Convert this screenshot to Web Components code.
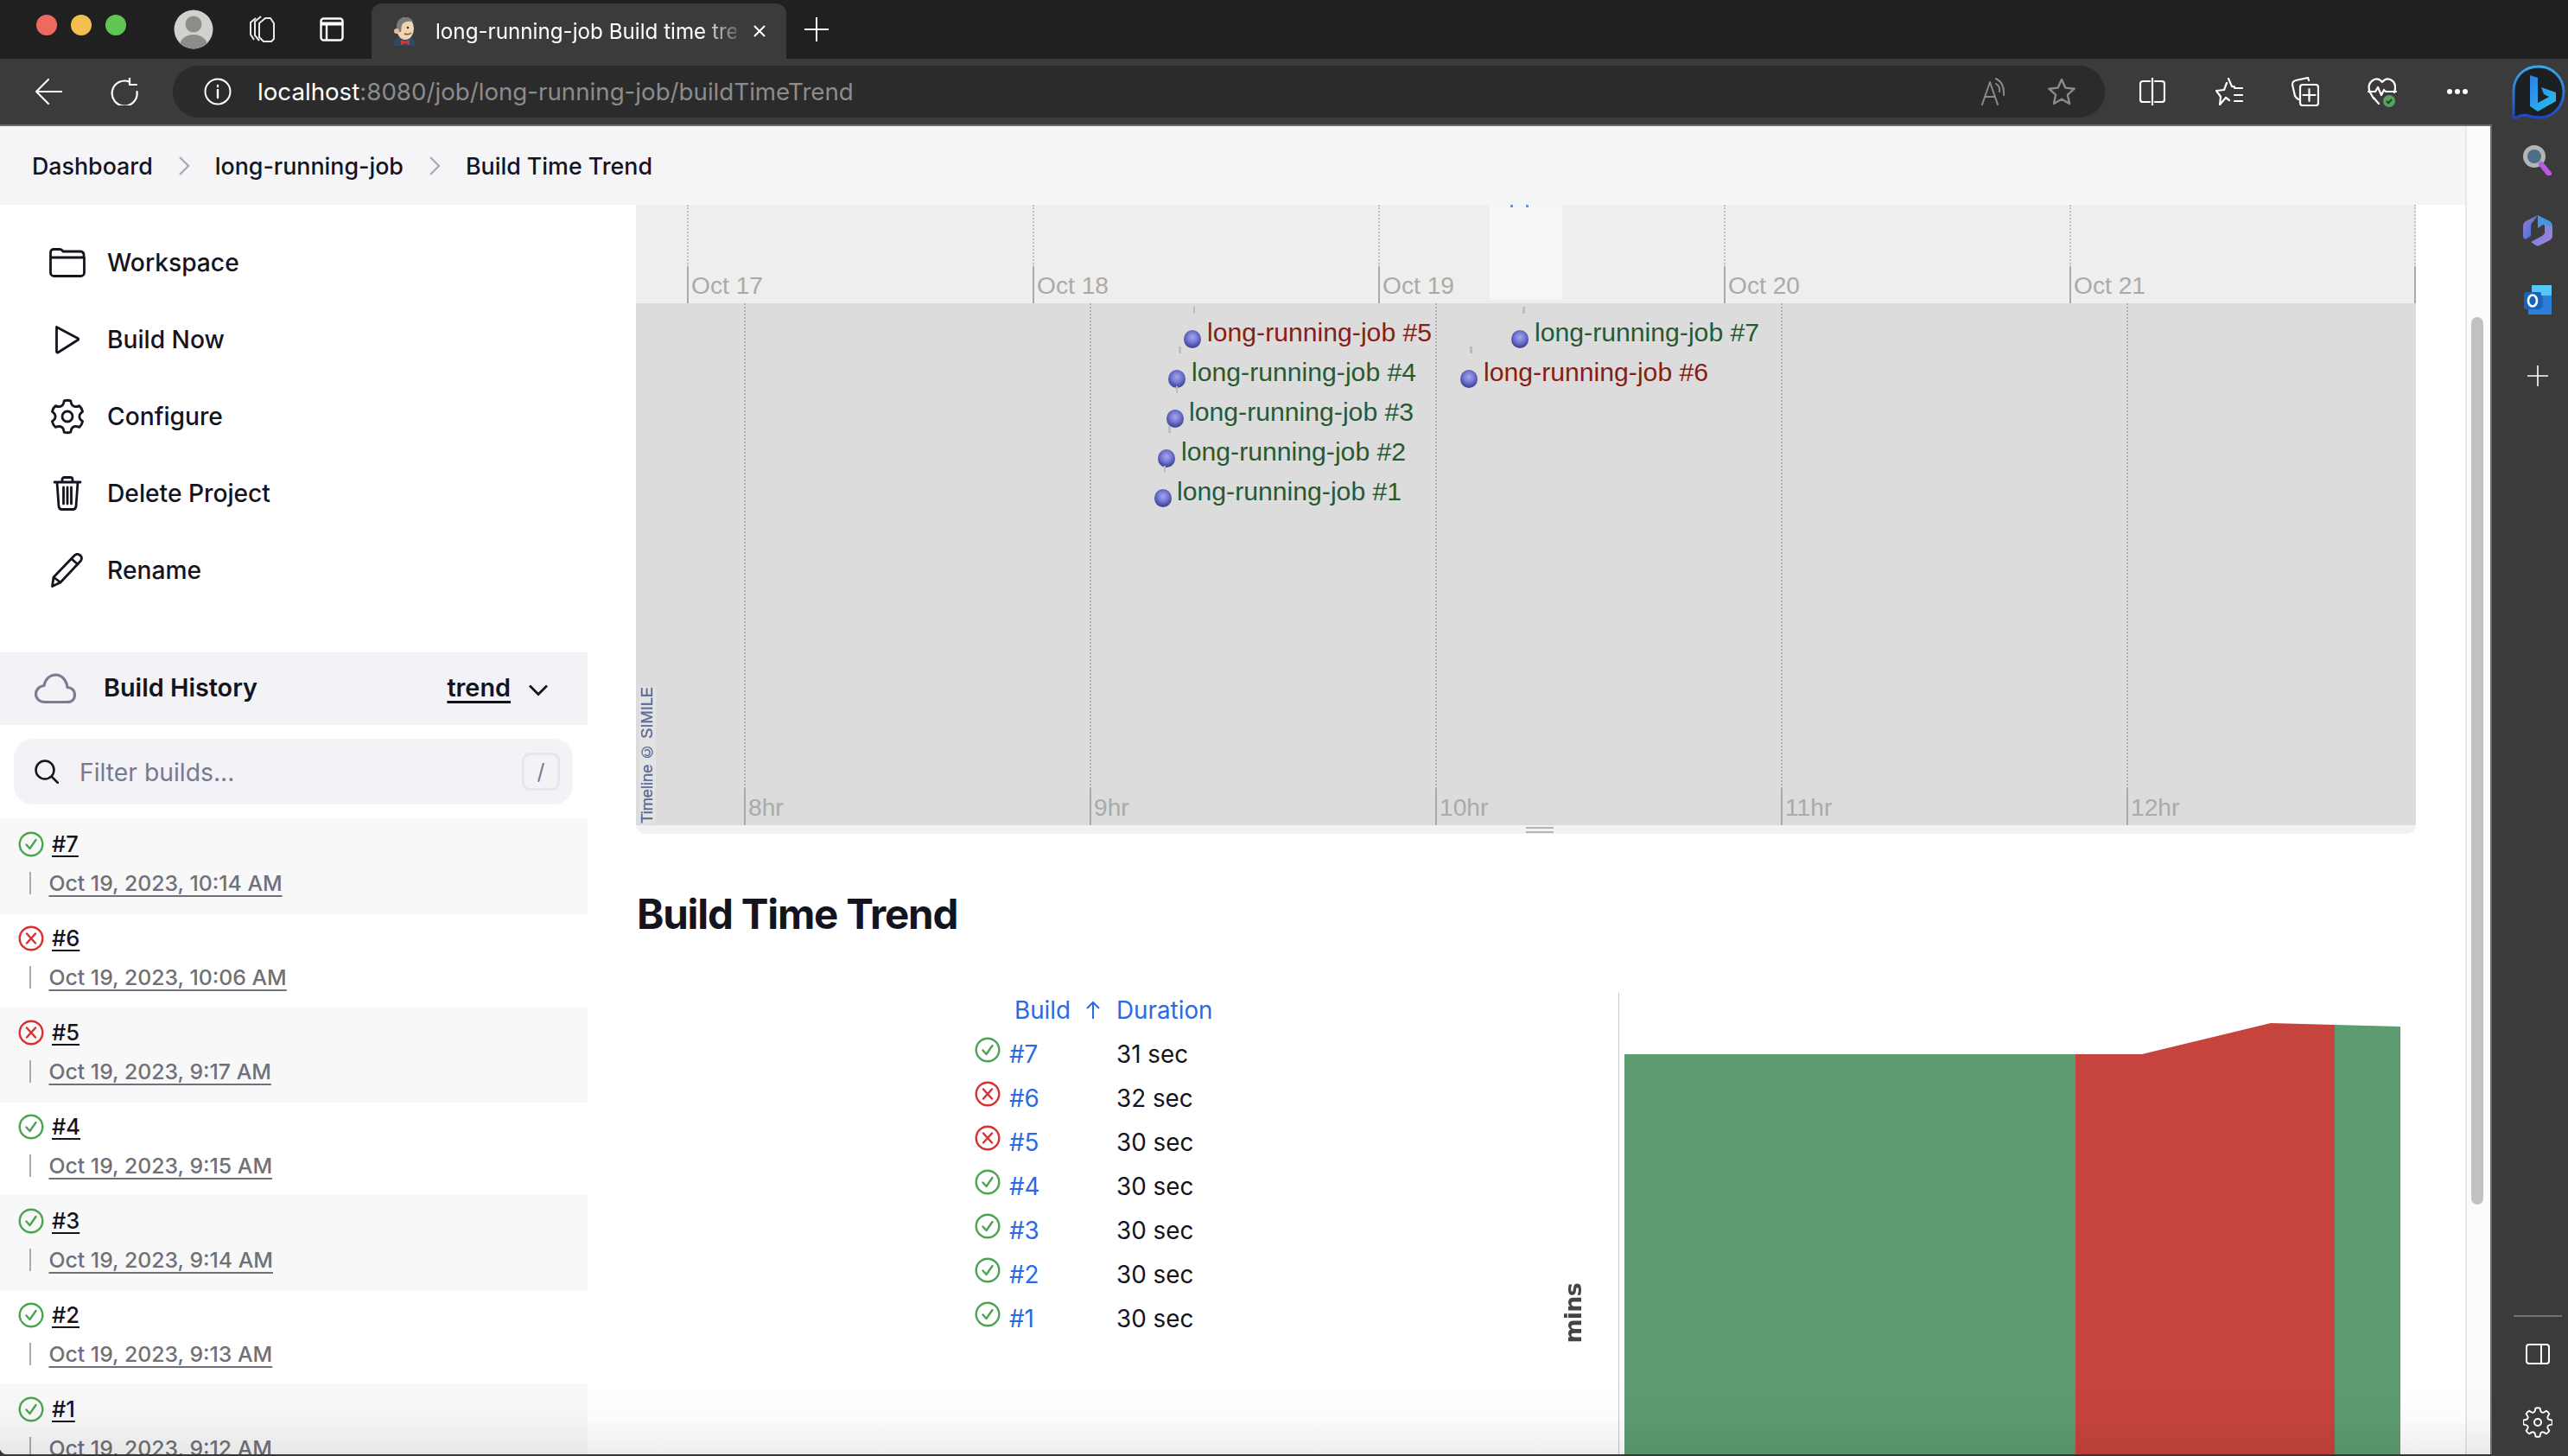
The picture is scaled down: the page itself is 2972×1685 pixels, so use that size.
<!DOCTYPE html>
<html lang="en">
<head>
<meta charset="utf-8">
<title>long-running-job Build time trend</title>
<style>
html,body{margin:0;padding:0;height:1685px;overflow:hidden;background:#fff;}
body{font-family:Inter,"Liberation Sans",sans-serif;color:#14141f;}
</style>
</head>
<body>
<app-window></app-window>
<script>
function def(name, render){
  customElements.define(name, class extends HTMLElement{
    connectedCallback(){
      if(this.shadowRoot) return;
      this.attachShadow({mode:'open'}).innerHTML = render(this);
    }
  });
}
function gearPath(cx,cy,ro,ri,n){
  var d='',step=Math.PI*2/n;
  function p(r,a){return (cx+r*Math.cos(a)).toFixed(2)+' '+(cy+r*Math.sin(a)).toFixed(2);}
  for(var i=0;i<n;i++){
    var a=-Math.PI/2+i*step;
    d+=(i?'L':'M')+p(ro,a-step*.2)+' Q'+p(ro*1.05,a)+' '+p(ro,a+step*.2)+' Q'+p(ri*.98,a+step*.32)+' '+p(ri,a+step*.5)+' Q'+p(ri*.98,a+step*.68)+' '+p(ro,a+step*.8);
  }
  return d+'Z';
}

/* ---------- browser frame ---------- */
def('tab-strip',()=>`<style>
:host{display:flex;align-items:center;height:68px;background:#202020;box-sizing:border-box;padding-left:42px;position:relative}
.l{width:24px;height:24px;border-radius:50%;margin-right:16px;position:relative;top:-5px}
svg{display:block;flex:none}
.tab{width:480px;height:64px;align-self:flex-end;background:#3b3b3b;border-radius:12px 12px 0 0;display:flex;align-items:center;box-sizing:border-box;padding-left:22px;margin-left:32px;color:#fff}
.t{font:400 24.2px Inter,"Liberation Sans",sans-serif;width:348px;margin-left:20px;white-space:nowrap;-webkit-mask-image:linear-gradient(90deg,#000 88%,rgba(0,0,0,.25) 100%);mask-image:linear-gradient(90deg,#000 88%,rgba(0,0,0,.25) 100%)}
</style>
<span class="l" style="background:#ee6a5f"></span><span class="l" style="background:#f5bf4f"></span><span class="l" style="background:#61c554;margin-right:0"></span>
<svg width="46" height="46" viewBox="0 0 46 46" style="margin-left:55px"><defs><clipPath id="a"><circle cx="23" cy="23" r="22.5"/></clipPath></defs><circle cx="23" cy="23" r="22.5" fill="#d2d1cd"/><g clip-path="url(#a)" fill="#8e8c88"><circle cx="23" cy="17" r="9.5"/><ellipse cx="23" cy="42" rx="16" ry="13"/></g></svg>
<svg width="34" height="34" viewBox="0 0 34 34" fill="none" stroke="#e8e8e8" stroke-width="2" style="margin-left:40px"><path d="M9 4 3 9v14l4 6M15 2 8 8v16l5 6"/><path d="M20 4 13 10v16l5 5h9l3-3V10l-4-6z" stroke-linejoin="round"/></svg>
<svg width="28" height="28" viewBox="0 0 28 28" fill="none" stroke="#fff" stroke-width="2.4" style="margin-left:49px"><rect x="1.5" y="1.5" width="25" height="25" rx="3"/><path d="M1.5 7.5h25" stroke-width="4"/><path d="M8 8v18"/></svg>
<div class="tab">
<svg width="32" height="34" viewBox="0 0 32 34"><path d="M3 34c0-8 6-11 13-11s13 3 13 11z" fill="#2e4b63"/><ellipse cx="17" cy="14" rx="10" ry="13" fill="#efd5b6"/><path d="M8 18c-3-8 0-17 9-17 4 0 7 1 9 5-6-1-11 0-13 4l-1 8z" fill="#7b7a78"/><circle cx="7" cy="17" r="3" fill="#e7b89b"/><circle cx="20" cy="13" r="1.3" fill="#333"/><path d="M16 20q4 2 8-1" stroke="#8b4a36" stroke-width="1.4" fill="none"/><path d="M12 27l5 2 5-2v6l-5-2-5 2z" fill="#d33833"/></svg>
<span class="t">long-running-job Build time tre</span>
<svg width="16" height="16" viewBox="0 0 16 16" stroke="#fff" stroke-width="2" style="margin-left:19px"><path d="M2 2l12 12M14 2 2 14"/></svg>
</div>
<svg width="28" height="28" viewBox="0 0 28 28" stroke="#fff" stroke-width="2" style="margin-left:21px"><path d="M14 0v28M0 14h28"/></svg>`);

def('tool-bar',()=>`<style>
:host{display:flex;align-items:center;height:76px;background:#3b3b3b;box-sizing:border-box;padding-left:40px;position:relative}
svg{display:block;flex:none}
.addr{width:2236px;height:60px;border-radius:30px;background:#2b2b2b;margin-left:40px;display:flex;align-items:center;box-sizing:border-box;padding-left:36px}
.u{font:400 27.7px Inter,"Liberation Sans",sans-serif;color:#8c8c8c;margin-left:30px;white-space:nowrap;flex:1}
.u b{font-weight:400;color:#fff}
.ic{fill:none;stroke:#fff;stroke-width:2.2;stroke-linecap:round;stroke-linejoin:round}
.g{stroke:#8b8b8b}
</style>
<svg class="ic" width="32" height="30" viewBox="0 0 32 30"><path d="M16 1 2 15l14 14M2 15h30" stroke-width="2"/></svg>
<svg class="ic" width="32" height="32" viewBox="0 0 32 32" style="margin-left:56px"><path d="M22 4.8A14.5 14.5 0 1 0 30.5 16"/><path d="M22 0v8h8"/></svg>
<div class="addr">
<svg class="ic" width="32" height="32" viewBox="0 0 32 32"><circle cx="16" cy="16" r="14.5" stroke-width="2"/><path d="M16 14v9M16 9v1" stroke-width="2.4"/></svg>
<span class="u"><b>localhost</b>:8080/job/long-running-job/buildTimeTrend</span>
<svg class="ic g" width="32" height="32" viewBox="0 0 32 32" style="margin-right:44px"><path d="M1 31 10 5l9 26M4 22h12M17 1q10 5 9 19M17 7q5 3 4 9" stroke-width="2"/></svg>
<svg class="ic g" width="34" height="32" viewBox="0 0 34 32" style="margin-right:33px"><path d="m17 2 4.3 9.6 10.4 1.1-7.8 7 2.2 10.3L17 24.7 7.900 30l2.200-10.300-7.800-7 10.400-1.100z" stroke-width="2.400"/></svg>
</div>
<svg class="ic" width="30" height="32" viewBox="0 0 30 32" style="margin-left:40px"><path d="M12 4H4a3 3 0 0 0-3 3v18a3 3 0 0 0 3 3h8M18 4h8a3 3 0 0 1 3 3v18a3 3 0 0 1-3 3h-8M15 0v32"/></svg>
<svg class="ic" width="32" height="32" viewBox="0 0 32 32" style="margin-left:58px"><path d="M15 1 19 10l3 .4M31 12H22M31 20H22M31 27h-9M12 23l-7 8 1-9-5-7 9-1 3-8"/><path d="M12 23l4 3"/></svg>
<svg class="ic" width="32" height="34" viewBox="0 0 32 34" style="margin-left:56px"><path d="M20 4 19 1 5 4Q1 5 1 9l3 13q1 2 4 4"/><rect x="10" y="9" width="21" height="24" rx="3"/><path d="M20.500 14v14M13.500 21h14"/></svg>
<svg width="34" height="36" viewBox="0 0 34 36" style="margin-left:56px"><g class="ic"><path d="M7 26 3 19Q-1 10 6 5q6-4 11 2 5-6 11-2 6 4 3 14M0 18h9l3-5 4 9 3-6 2 2h12M7 25l6 7"/></g><circle cx="25" cy="29" r="7" fill="#57a25e"/><path d="m22 29 2.200 2.200 4-4.400" fill="none" stroke="#1e3b22" stroke-width="1.800"/></svg>
<svg width="26" height="8" viewBox="0 0 26 8" fill="#fff" style="margin-left:57px"><circle cx="4" cy="4" r="3"/><circle cx="13" cy="4" r="3"/><circle cx="22" cy="4" r="3"/></svg>
<svg width="62" height="64" viewBox="0 0 62 64" style="margin-left:50px;position:relative;top:1px"><defs><linearGradient id="bo" x1="0" y1="0" x2="0" y2="1"><stop offset="0" stop-color="#3aa6e8"/><stop offset="1" stop-color="#1f47c4"/></linearGradient><linearGradient id="bb" x1="0" y1="0" x2="1" y2="1"><stop offset="0" stop-color="#2e7ee8"/><stop offset="1" stop-color="#29c3e8"/></linearGradient></defs><path d="M31 2C14 2 2 14 2 30v30q0 2 3 1 8-4 14-2 6 2 13 2c17 0 28-14 28-30S47 2 31 2z" fill="#1d2022" stroke="url(#bo)" stroke-width="3"/><path d="M21 12l9 3v29l13-7-6-3-3-8 17 6v10L30 54l-9-6z" fill="url(#bb)"/></svg>`);

def('side-rail',()=>`<style>
:host{display:flex;flex-direction:column;align-items:center;width:88px;background:#3b3b3b;box-sizing:border-box;padding:23px 0 0 18px;flex:none;height:1539px}
svg{display:block;flex:none}
.ic{fill:none;stroke:#fff;stroke-width:2;stroke-linecap:round;stroke-linejoin:round}
hr{width:56px;height:2px;border:0;background:#707070;margin:auto 0 31px}
</style>
<svg width="36" height="36" viewBox="0 0 36 36"><circle cx="14" cy="14" r="10.500" fill="#4d6d88" stroke="#b4b4b4" stroke-width="5"/><path d="m22 23 9 11" stroke="#b85be0" stroke-width="6" stroke-linecap="round"/></svg>
<svg width="34" height="36" viewBox="0 0 34 36" style="margin-top:46px"><defs><linearGradient id="c1" x1="0" y1="0" x2="1" y2="1"><stop offset="0" stop-color="#9e7be0"/><stop offset="1" stop-color="#2c6ed0"/></linearGradient><linearGradient id="c2" x1="0" y1="0" x2="1" y2="1"><stop offset="0" stop-color="#5b8fe4"/><stop offset="1" stop-color="#b27ad8"/></linearGradient></defs><path d="M17 0 3 7Q0 9 0 12v12q0 3 3 4l6-4V12q0-3 3-5z" fill="url(#c1)"/><path d="M17 0l14 7q3 2 3 5v4l-11-5-6 4V6z" fill="#4a94df"/><path d="M34 14v10q0 3-3 5l-12 6q-2 1-4 0l-6-4 13-7 3-3V11z" fill="url(#c2)"/></svg>
<svg width="32" height="34" viewBox="0 0 32 34" style="margin-top:45px"><path d="M9 0h23v17H9z" fill="#55c6f5"/><path d="M5 12h27v22H5z" fill="#2c7fd6"/><path d="M9 12h13v14l-13-.000z" fill="#2566b8"/><rect x="0" y="8" width="20" height="20" rx="2" fill="#1a63bd"/><ellipse cx="10" cy="18" rx="5" ry="6.500" fill="none" stroke="#fff" stroke-width="2.600"/></svg>
<svg class="ic" width="24" height="24" viewBox="0 0 24 24" style="margin-top:59px"><path d="M12 0v24M0 12h24" stroke-width="1.600"/></svg>
<hr>
<svg class="ic" width="28" height="24" viewBox="0 0 28 24" style="margin-bottom:49px"><rect x="1" y="1" width="26" height="22" rx="3"/><path d="M18 1v22"/></svg>
<svg class="ic" width="34" height="36" viewBox="0 0 34 36" style="margin-bottom:19px"><path d="${gearPath(17,18,16.500,12.500,8)}" stroke-width="1.900"/><circle cx="17" cy="18" r="4"/></svg>`);

/* ---------- jenkins page ---------- */
def('bread-crumbs',()=>`<style>
:host{display:flex;align-items:center;height:91px;background:#f5f5f8;box-sizing:border-box;padding-left:37px;font:500 26.8px Inter,"Liberation Sans",sans-serif;color:#14141f;flex:none}
svg{margin:0 29px 0 29px;display:block}
</style>
<span>Dashboard</span>
<svg width="14" height="22" viewBox="0 0 14 22" fill="none" stroke="#a9a9bd" stroke-width="2.400"><path d="m2 1 10 10L2 21"/></svg>
<span>long-running-job</span>
<svg width="14" height="22" viewBox="0 0 14 22" fill="none" stroke="#a9a9bd" stroke-width="2.400"><path d="m2 1 10 10L2 21"/></svg>
<span>Build Time Trend</span>`);

const TASK_ICONS={
 folder:`<svg width="42" height="34" viewBox="0 0 42 34"><path d="M1.500 11V5a3.500 3.500 0 0 1 3.500-3.500h7a4 4 0 0 1 3 1.300l1 1.200h20.500a4 4 0 0 1 3.500 3.500V11M1.500 11h39v17.500a4 4 0 0 1-4 4h-31a4 4 0 0 1-4-4z"/></svg>`,
 play:`<svg width="42" height="34" viewBox="0 0 42 34"><path d="M8.500 2.500 33 15.500q1.500 1 0 2L10 32q-1.500.5-1.500-1.500z"/></svg>`,
 gear:`<svg width="42" height="42" viewBox="0 0 42 42"><path d="${gearPath(21,21,18.500,14,6)}"/><circle cx="21" cy="21" r="6"/></svg>`,
 trash:`<svg width="42" height="40" viewBox="0 0 42 40"><path d="M6 7h30M15 7V4q0-2.500 2.500-2.500h7Q27 1.500 27 4v3M9 7l2 28q.500 3.500 3.500 3.500h13q3 0 3.500-3.500l2-28M16.500 13v19M21 13v19M25.500 13v19"/></svg>`,
 pencil:`<svg width="42" height="40" viewBox="0 0 42 40"><path d="M3.500 38.500 5 28 29 3q3-3 6.500-.5t1 6.500L13 34zM5 28l8 6M26 7l7 6"/></svg>`
};
def('task-item',(h)=>`<style>
:host{display:flex;align-items:center;height:89px;padding-left:57px;font:500 28.2px Inter,"Liberation Sans",sans-serif;color:#14141f}
svg{display:block;fill:none;stroke:#14141f;stroke-width:2.800;stroke-linejoin:round;stroke-linecap:round}
.i{width:67px;flex:none}
</style><span class="i">${TASK_ICONS[h.getAttribute('icon')]}</span><span><slot></slot></span>`);

def('status-icon',(h)=>{
 const ok=h.getAttribute('kind')==='ok', c=ok?'#4ca350':'#d9302f';
 return `<style>:host{display:block;width:30px;height:30px;flex:none}svg{display:block}</style>
 <svg width="30" height="30" viewBox="0 0 30 30" fill="none" stroke="${c}" stroke-width="2.400" stroke-linecap="round" stroke-linejoin="round"><circle cx="15" cy="15" r="13.300"/>${ok?'<path d="m9.500 15.500 4 4.500 7-10"/>':'<path d="m10 9.500 10 11M20 9.500l-10 11"/>'}</svg>`;
});

def('build-row',(h)=>{
 const odd=h.hasAttribute('odd');
 return `<style>
 :host{display:flex;flex-direction:column;height:109px;box-sizing:border-box;padding:14px 0 0 21px;position:relative;${odd?'background:#f8f8f9;box-shadow:0 -1px 0 #f8f8f9,0 1px 0 #f8f8f9;':''}font-family:Inter,"Liberation Sans",sans-serif}
 .t{display:flex;align-items:center;height:30px;font:500 25.500px/30px Inter,"Liberation Sans",sans-serif;color:#14141f}
 .t a{margin-left:9px;text-decoration:underline;text-decoration-thickness:2px;text-underline-offset:4px;color:inherit}
 .d{display:flex;align-items:center;height:30px;margin-top:15px;font:450 24.800px/30px Inter,"Liberation Sans",sans-serif;color:#6f7079}
 .d i{display:block;width:2px;height:26px;background:#a6acb3;margin:0 20.500px 0 13px}
 .d a{color:inherit;text-decoration:underline;text-decoration-thickness:2px;text-underline-offset:5px;white-space:nowrap}
 </style>
 <div class="t"><status-icon kind="${h.getAttribute('kind')}"></status-icon><a>${h.getAttribute('num')}</a></div>
 <div class="d"><i></i><a>${h.getAttribute('date')}</a></div>`;
});

def('build-history',()=>{
 const rows=[['#7','ok','Oct 19, 2023, 10:14 AM'],['#6','bad','Oct 19, 2023, 10:06 AM'],['#5','bad','Oct 19, 2023, 9:17 AM'],['#4','ok','Oct 19, 2023, 9:15 AM'],['#3','ok','Oct 19, 2023, 9:14 AM'],['#2','ok','Oct 19, 2023, 9:13 AM'],['#1','ok','Oct 19, 2023, 9:12 AM']];
 return `<style>
 :host{display:block;margin-top:51px;font-family:Inter,"Liberation Sans",sans-serif}
 .h{display:flex;align-items:center;height:84px;background:#f2f2f7;box-sizing:border-box;padding-left:40px}
 .h b{font:600 28.800px/28px Inter,"Liberation Sans",sans-serif;margin:-3px 0 0 32px;flex:1}
 .h a{font:600 28.800px/28px Inter,"Liberation Sans",sans-serif;margin-top:-3px;text-decoration:underline;text-decoration-thickness:2.500px;text-underline-offset:5px}
 .f{display:flex;align-items:center;height:76px;margin:16px 17px 17px 16px;background:#f2f2f7;border-radius:22px;box-sizing:border-box;padding-left:24px}
 .f span.p{font:400 28.300px Inter,"Liberation Sans",sans-serif;color:#777a8f;margin-left:24px;flex:1;position:relative;top:1px}
 .k{width:44px;height:44px;box-sizing:border-box;border:3px solid #e6e6ef;border-radius:9px;display:flex;align-items:center;justify-content:center;font:400 25px Inter,sans-serif;color:#777a8f;margin-right:15px}
 svg{display:block;flex:none}
 </style>
 <div class="h">
  <svg width="48" height="36" viewBox="0 0 48 36" fill="none" stroke="#7c7d94" stroke-width="3.200" stroke-linejoin="round"><path d="M12 33.500h26c5.500 0 8.500-3.500 8.500-8.500s-3.500-8.500-8.500-8.500C37 8 31.500 2 24.500 2S12.500 7 11 14.500C5 15 1.500 19.500 1.500 24.500s4 9 10.500 9z"/></svg>
  <b>Build History</b><a>trend</a>
  <svg width="22" height="14" viewBox="0 0 22 14" fill="none" stroke="#14141f" stroke-width="2.800" style="margin:4px 46px 0 21px"><path d="m1 1.500 10 10 10-10"/></svg>
 </div>
 <div class="f">
  <svg width="28" height="28" viewBox="0 0 28 28" fill="none" stroke="#14141f" stroke-width="2.500" stroke-linecap="round"><circle cx="12" cy="12" r="10.500"/><path d="m20 20 7 7"/></svg>
  <span class="p">Filter builds...</span><span class="k">/</span>
 </div>
 ${rows.map((r,i)=>`<build-row num="${r[0]}" kind="${r[1]}" date="${r[2]}" ${i%2==0?'odd':''}></build-row>`).join('')}`;
});

def('job-sidebar',()=>`<style>:host{display:block;width:680px;flex:none;padding-top:22px;box-sizing:border-box}</style>
<task-item icon="folder">Workspace</task-item>
<task-item icon="play">Build Now</task-item>
<task-item icon="gear">Configure</task-item>
<task-item icon="trash">Delete Project</task-item>
<task-item icon="pencil">Rename</task-item>
<build-history></build-history>`);

def('time-line',()=>{
 const X=v=>v-736;
 const grid=(xs,labels,split,off)=>xs.map((x,i)=>`<i class="ds" style="left:${X(x)}px;height:${split}px"></i><i class="so" style="left:${X(x)}px;top:${split}px;bottom:0"></i>`+(labels[i]?`<span class="lb" style="left:${X(x)+off}px">${labels[i]}</span>`:'')).join('');
 const ev=[
  [1380,392,1397,385,'#5','r',1381,355,2],[1362,438,1379,431,'#4','g',1364,401,3],[1359.5,484,1376,477,'#3','g',1361,447,1.500],
  [1350,530,1367,523,'#2','g',1352,493,3],[1346,576,1362,569,'#1','g',1347,539,1.500],[1759,392,1776,385,'#7','g',1762,355,3],[1700,438,1717,431,'#6','r',1701,401,3]];
 return `<style>
 :host{display:block;width:2060px;position:relative;font-family:"Liberation Sans",Arial,sans-serif}
 .top{height:114px;background:#eee;position:relative;overflow:hidden}
 .bot{height:604px;background:#dcdcdc;position:relative;overflow:hidden}
 .ds{position:absolute;top:0;width:0;border-left:2px dotted #c2c2c2}
 .bot .ds{border-left-color:#b4b4b4}
 .so{position:absolute;width:2px;background:#aaa}
 .lb{position:absolute;bottom:6px;font-size:28.200px;line-height:30px;color:#aaa;white-space:nowrap}
 .hl{position:absolute;left:988px;top:0;width:84px;height:110px;background:#f6f6f6}
 .hl::before,.hl::after{content:"";position:absolute;top:0;width:3px;height:3px;background:#5a9be0}
 .hl::before{left:24px}.hl::after{left:42px}
 .dot{position:absolute;width:20px;height:21px;margin:-10px 0 0 -10px;border-radius:50%;background:radial-gradient(circle at 50% 40%,#a5a7ee 0,#7477d2 38%,#474a9f 68%,#25276a 96%)}
 .ev{position:absolute;font-size:30.200px;line-height:34px;margin-top:-17px;white-space:nowrap}
 .r{color:#871d17}.g{color:#275a33}
 .tk{position:absolute;height:8px}
 .cp{position:absolute;left:4px;bottom:2px;writing-mode:vertical-rl;transform:rotate(180deg);font:400 18.200px/19px "Liberation Sans",sans-serif;color:#5d6b97;background:rgba(255,255,255,.22);white-space:nowrap;-webkit-text-stroke:.4px #5d6b97}
 .grip{height:10px;background:#f2f2f2;border-radius:0 0 14px 14px;display:flex;justify-content:center;align-items:center;padding-left:32px}
 .grip i{display:block;width:32px;height:7px;border-top:2.500px solid #b5b5b5;border-bottom:2.500px solid #b5b5b5;box-sizing:border-box}
 </style>
 <div class="top">${grid([795,1195,1595,1995,2395,2794],['Oct 17','Oct 18','Oct 19','Oct 20','Oct 21',''],72,5)}<div class="hl"></div></div>
 <div class="bot">${grid([861,1261,1661,2061,2461],['8hr','9hr','10hr','11hr','12hr'],562,5)}
 ${ev.map(e=>`<i class="tk" style="left:${X(e[6])}px;top:${e[7]-351}px;width:${e[8]}px;background:${e[5]=='r'?'#d2b0b0':'#b9c2bb'}"></i><i class="dot" style="left:${X(e[0])}px;top:${e[1]-351}px"></i><span class="ev ${e[5]}" style="left:${X(e[2])}px;top:${e[3]-351}px">long-running-job ${e[4]}</span>`).join('')}
 <span class="cp">Timeline © SIMILE</span></div>
 <div class="grip"><i></i></div>`;
});

def('trend-table',()=>{
 const rows=[['#7','ok','31 sec'],['#6','bad','32 sec'],['#5','bad','30 sec'],['#4','ok','30 sec'],['#3','ok','30 sec'],['#2','ok','30 sec'],['#1','ok','30 sec']];
 return `<style>
 :host{display:grid;grid-template-columns:40px 124px auto;grid-auto-rows:51px;align-items:center;justify-content:start;margin-left:391px;width:400px;flex:none;font:400 27.800px Inter,"Liberation Sans",sans-serif;color:#14141f;align-self:flex-start}
 a{color:#2a6be0}
 .hb{display:flex;align-items:center;grid-column:2;padding-left:6px;color:#2a6be0}
 .hb svg{margin-left:18px;display:block}
 status-icon{position:relative;top:-5px}
 </style>
 <span></span><span class="hb">Build<svg width="16" height="22" viewBox="0 0 16 22" fill="none" stroke="#2a6be0" stroke-width="2"><path d="M8 21V2M1 9l7-7 7 7"/></svg></span><a>Duration</a>
 ${rows.map(r=>`<status-icon kind="${r[1]}"></status-icon><a>${r[0]}</a><span>${r[2]}</span>`).join('')}`;
});

def('trend-chart',()=>`<style>
:host{display:flex;margin:6px 0 0 280px;flex:none}
.y{width:25px;margin-right:40px;padding-top:336px;box-sizing:content-box;flex:none}
.y span{display:block;writing-mode:vertical-rl;transform:rotate(180deg);font:700 27px/25px "DejaVu Sans",sans-serif;color:#444;letter-spacing:-.8px}
svg{display:block;flex:none}
</style>
<div class="y"><span>mins</span></div>
<svg width="923" height="540" viewBox="1873 1149 923 540">
<path d="M1873 1149V1689" stroke="#c8c8c8" stroke-width="2" fill="none"/>
<path d="M1880 1220H2402V1689H1880z" fill="#5d9b70"/>
<path d="M2402 1220H2479L2628 1184 2702 1186V1689H2402z" fill="#c5443d"/>
<path d="M2702 1186 2778 1188V1689H2702z" fill="#5d9b70"/>
</svg>`);

def('trend-section',()=>`<style>:host{display:flex;width:2059px;margin-left:1px}</style><trend-table></trend-table><trend-chart></trend-chart>`);

def('job-content',()=>`<style>
:host{display:block;flex:1;padding-left:56px;min-width:0}
h1{font:700 47.500px/60px Inter,"Liberation Sans",sans-serif;margin:63px 0 55px 1px;color:#14141f;letter-spacing:-1.2px}
</style>
<time-line></time-line>
<h1>Build Time Trend</h1>
<trend-section></trend-section>`);

def('page-scrollbar',()=>`<style>
:host{display:block;width:29px;flex:none;background:#fbfbfb;border-left:2px solid #e8e8e8;box-sizing:border-box;padding:221px 6px 0 5px}
i{display:block;height:1027px;border-radius:8px;background:#c1c1c1;width:14px}
</style><i></i>`);

def('app-window',()=>`<style>
:host{display:block;width:2972px;height:1685px;position:relative;overflow:hidden;background:#3b3b3b}
.view{display:flex;height:1539px;align-items:flex-start}
.page{width:2882px;height:1537px;background:#fff;display:flex;flex:none;border-top:2px solid #6a6a6a;border-right:2px solid #6a6a6a;overflow:hidden;border-bottom-left-radius:8px}
.main{flex:1;min-width:0;display:flex;flex-direction:column;height:1537px;overflow:hidden}
.cols{display:flex;flex:1;min-height:0}
.fade{position:absolute;left:0;bottom:0;width:2882px;height:85px;background:linear-gradient(180deg,rgba(0,0,0,0) 0,rgba(0,0,0,.012) 45%,rgba(0,0,0,.07) 100%);pointer-events:none}
</style>
<tab-strip></tab-strip>
<tool-bar></tool-bar>
<div class="view">
 <div class="page">
  <div class="main"><bread-crumbs></bread-crumbs><div class="cols"><job-sidebar></job-sidebar><job-content></job-content></div></div>
  <page-scrollbar></page-scrollbar>
 </div>
 <side-rail></side-rail>
</div>
<div class="fade"></div>`);
</script>
</body>
</html>
